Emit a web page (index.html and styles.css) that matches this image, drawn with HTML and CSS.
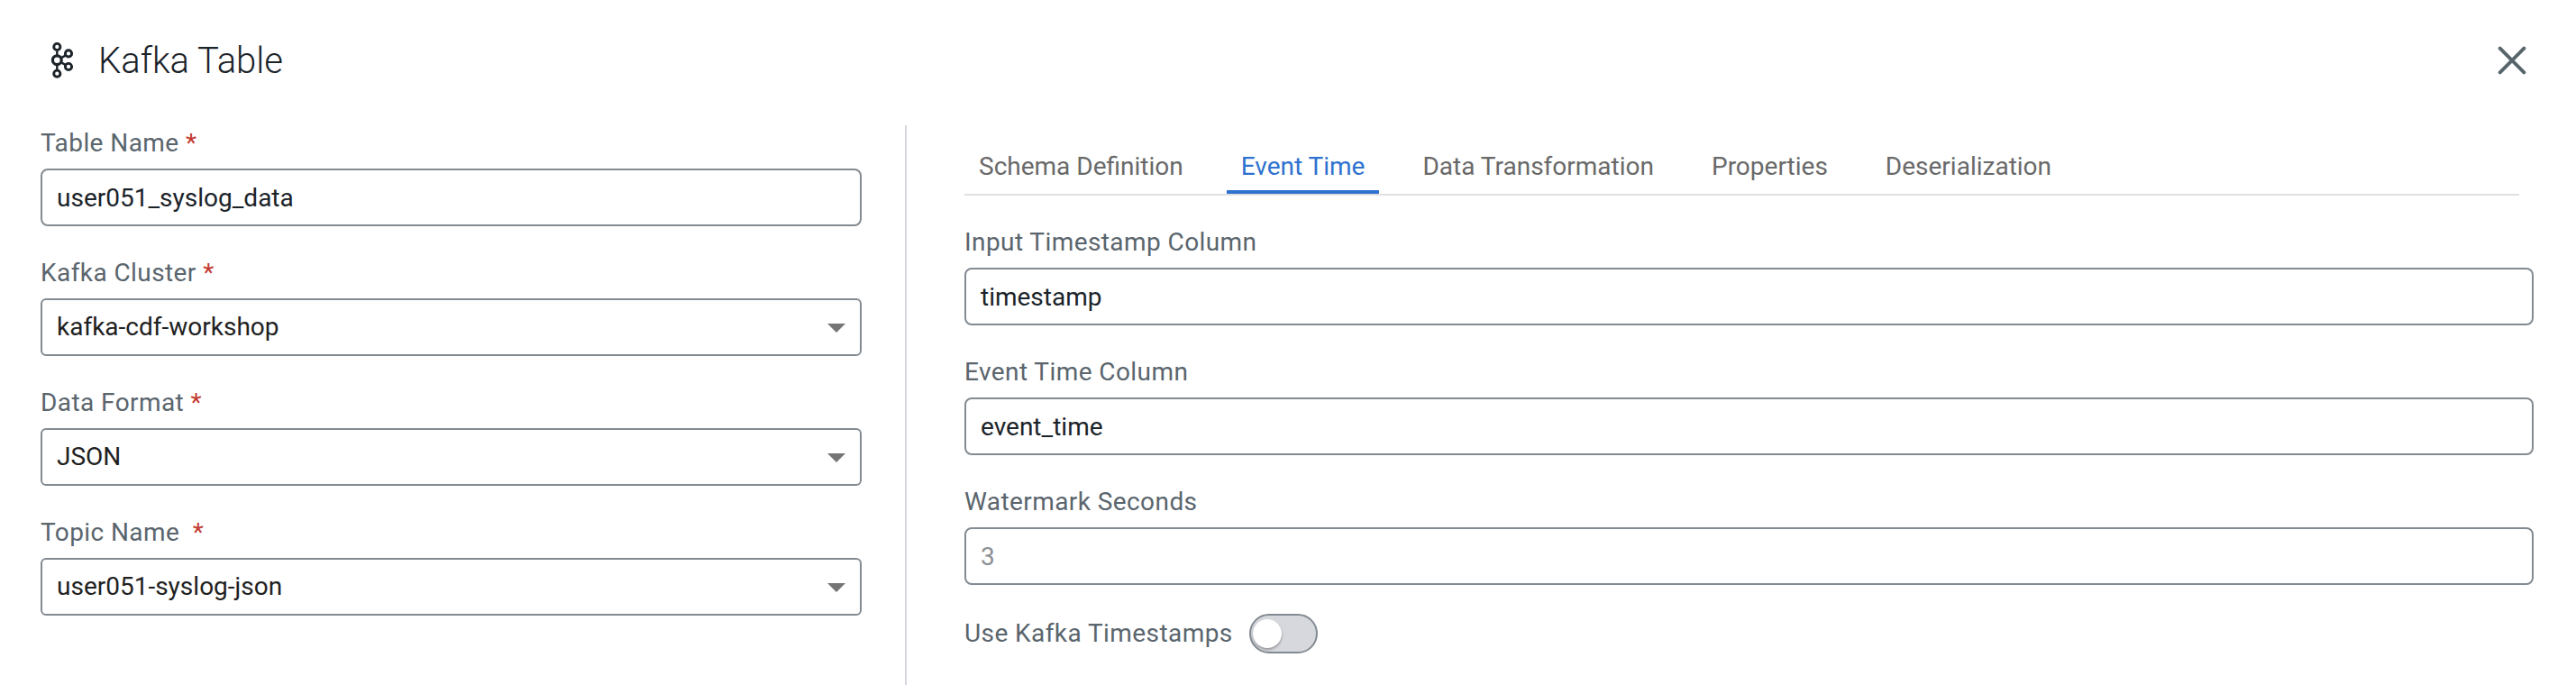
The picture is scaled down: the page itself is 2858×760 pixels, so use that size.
FILE: index.html
```
<!DOCTYPE html>
<html lang="en">
<head>
<meta charset="utf-8">
<title>Kafka Table</title>
<link rel="stylesheet" href="styles.css">
</head>
<body>
<header class="header">
  <svg class="logo" viewBox="0 0 30 42" width="30" height="42" fill="none" stroke="#1b2329">
    <path d="M10.3 10.5v5M10.3 26v5M15.5 17.9l4-2.3M15.5 23.6l4 2.3" stroke-width="2.4"/>
    <circle cx="10.3" cy="20.7" r="4.9" stroke-width="3.2"/>
    <g stroke-width="2.9">
      <circle cx="10.3" cy="6" r="3.6"/>
      <circle cx="10.3" cy="35.7" r="3.6"/>
      <circle cx="23" cy="13.4" r="3.6"/>
      <circle cx="23" cy="28" r="3.6"/>
    </g>
  </svg>
  <h1 class="title">Kafka Table</h1>
  <svg class="close" viewBox="0 0 32 32" width="32" height="32" stroke="#59656c" stroke-width="4" stroke-linecap="round">
    <path d="M2.7 2.7l26.6 26.6M29.3 2.7L2.7 29.3"/>
  </svg>
</header>
<main class="body">
  <section class="left">
    <div class="field"><div class="label">Table Name <span class="req">*</span></div><div class="input">user051_syslog_data</div></div>
    <div class="field"><div class="label">Kafka Cluster <span class="req">*</span></div><div class="input select">kafka-cdf-workshop<i class="arrow"></i></div></div>
    <div class="field"><div class="label">Data Format <span class="req">*</span></div><div class="input select">JSON<i class="arrow"></i></div></div>
    <div class="field"><div class="label">Topic Name <span class="req req-wide">*</span></div><div class="input select">user051-syslog-json<i class="arrow"></i></div></div>
  </section>
  <section class="right">
    <nav class="tabs">
      <div class="tab">Schema Definition</div>
      <div class="tab active">Event Time</div>
      <div class="tab">Data Transformation</div>
      <div class="tab">Properties</div>
      <div class="tab">Deserialization</div>
    </nav>
    <div class="field"><div class="label">Input Timestamp Column</div><div class="input">timestamp</div></div>
    <div class="field"><div class="label">Event Time Column</div><div class="input">event_time</div></div>
    <div class="field"><div class="label">Watermark Seconds</div><div class="input placeholder">3</div></div>
    <div class="toggle-row"><div class="label toggle-label">Use Kafka Timestamps</div><div class="toggle"><div class="knob"></div></div></div>
  </section>
</main>
</body>
</html>
```
FILE: styles.css
```
* { box-sizing: border-box; }
body {
  margin: 0;
  height: 760px;
  overflow: hidden;
  display: flex;
  flex-direction: column;
  background: #fff;
  font-family: Roboto, "Liberation Sans", sans-serif;
  font-size: 28px;
  line-height: 33px;
}
.header {
  display: flex;
  align-items: center;
  height: 139px;
  padding: 0 55px 5px 53px;
}
.logo { margin-right: 26px; }
.title {
  margin: 0;
  flex: 1;
  font-size: 40px;
  line-height: 47px;
  font-weight: 300;
  color: #1b2329;
}
.body { display: flex; flex: 1; }
.left {
  width: 1006px;
  padding: 3px 48px 0 45px;
  border-right: 2px solid #d6d6de;
}
.right { flex: 1; padding: 0 47px 0 64px; }
.field { margin-bottom: 35px; }
.label {
  margin-bottom: 12px;
  color: #5a656d;
  letter-spacing: 0.42px;
}
.req { color: #c33a31; }
.req-wide { margin-left: 7px; }
.input {
  height: 64px;
  padding: 14px 16px;
  border: 2px solid #838b92;
  border-radius: 8px;
  color: #1b2329;
}
.select {
  display: flex;
  justify-content: space-between;
  padding-top: 13px;
  border-radius: 6px;
  color: #212121;
}
.arrow {
  margin: 13px 0 0;
  width: 0;
  height: 0;
  border: 10px solid transparent;
  border-top-color: #757575;
  border-bottom: 0;
}
.placeholder { color: #8d9093; }
.tabs {
  display: flex;
  gap: 32px;
  height: 78px;
  margin: 0 16px 35px 0;
  padding-top: 29px;
  border-bottom: 2px solid #e0e0e0;
}
.tab {
  padding: 0 16px;
  color: #696969;
  border-bottom: 4px solid transparent;
}
.active { color: #2f72d0; border-bottom-color: #2f72d0; }
.toggle-row { display: flex; align-items: center; gap: 18px; margin-top: -3px; }
.toggle-label { margin: 0 0 1px; }
.toggle {
  width: 76px;
  height: 44px;
  padding: 4px 2px;
  border: 2px solid #838b92;
  border-radius: 22px;
  background: #d6d8dd;
}
.knob {
  width: 32px;
  height: 32px;
  border-radius: 50%;
  background: #fff;
  box-shadow: 0 2px 3px rgba(0, 0, 0, 0.3);
}
```
